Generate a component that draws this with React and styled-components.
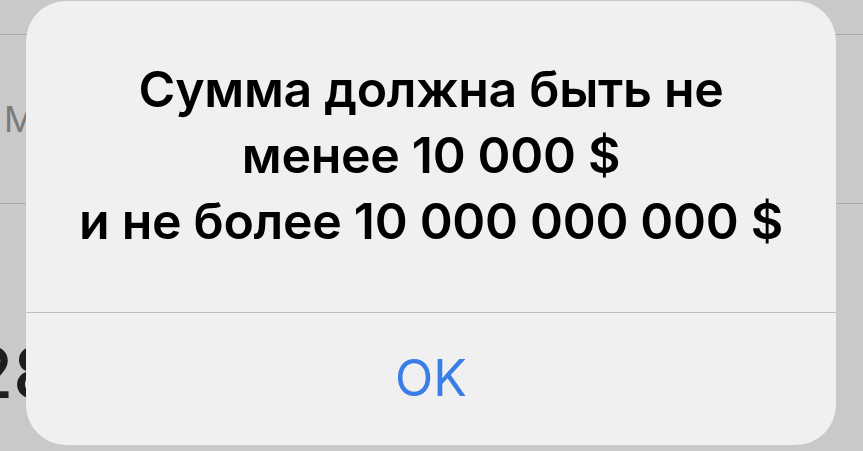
import React from "react";
import styled, { createGlobalStyle } from "styled-components";

const Global = createGlobalStyle`
  html, body { margin: 0; padding: 0; }
  body {
    background: #c9c9c9;
    font-family: Inter, "Noto Sans", "Liberation Sans", sans-serif;
    overflow: hidden;
  }
`;

const Screen = styled.div`
  position: relative;
  width: 863px;
  height: 451px;
  overflow: hidden;
  background: #c9c9c9;
`;

const Page = styled.div`
  display: flex;
  flex-direction: column;
`;

const Row = styled.div`
  height: ${(p) => p.$h}px;
  border-bottom: ${(p) => (p.$line ? "1px solid #a9a9a9" : "none")};
  display: flex;
  align-items: ${(p) => p.$align || "center"};
  padding-left: ${(p) => p.$pl || 0}px;
  box-sizing: border-box;
`;

const Placeholder = styled.span`
  font-size: 35px;
  color: #7b7b7b;
  line-height: 1;
`;

const BigValue = styled.span`
  font-size: 70px;
  color: #1e1e1e;
  font-weight: 500;
  line-height: 1;
  margin-top: 134px;
  margin-left: -30px;
`;

const Alert = styled.div`
  position: absolute;
  left: 26px;
  top: 1px;
  width: 810px;
  height: 444px;
  border-radius: 40px;
  background: #f0f0f0;
  display: flex;
  flex-direction: column;
  overflow: hidden;
`;

const Message = styled.div`
  height: 312px;
  box-sizing: border-box;
  padding-top: 55px;
  border-bottom: 1px solid #bfbfbf;
  text-align: center;
  font-size: 50px;
  font-weight: 600;
  line-height: 66px;
  color: #000;
  letter-spacing: -0.3px;
`;

const Button = styled.div`
  flex: 1;
  display: flex;
  align-items: center;
  justify-content: center;
  font-size: 50px;
  font-weight: 400;
  color: #3a7de6;
  padding-bottom: 2px;
`;

export default function App() {
  return (
    <Screen>
      <Global />
      <Page>
        <Row $h={35} $line />
        <Row $h={169} $line $pl={4}>
          <Placeholder>М</Placeholder>
        </Row>
        <Row $h={240} $align="flex-start">
          <BigValue>28</BigValue>
        </Row>
      </Page>
      <Alert>
        <Message>
          Сумма должна быть не
          <br />
          менее 10 000 $
          <br />
          и не более 10 000 000 000 $
        </Message>
        <Button>OK</Button>
      </Alert>
    </Screen>
  );
}
